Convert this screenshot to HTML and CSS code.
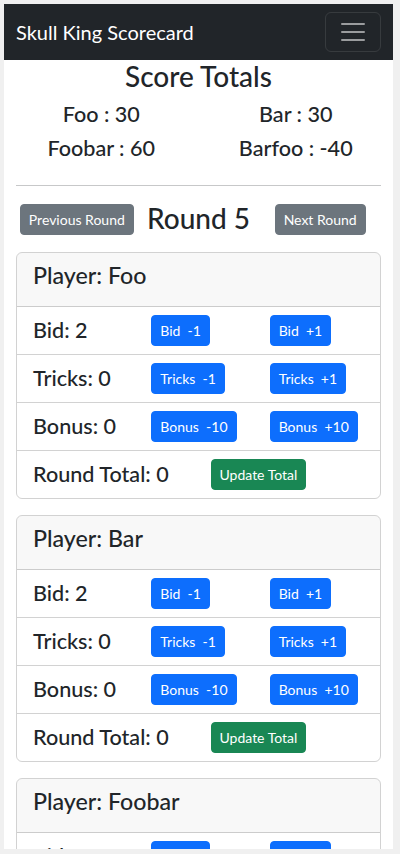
FILE: index.html
```html
<!DOCTYPE html>
<html lang="en">
<head>
<meta charset="utf-8">
<title>Skull King Scorecard</title>
<link rel="stylesheet" href="styles.css">
</head>
<body>
<div class="page">
  <nav class="navbar">
    <span class="brand">Skull King Scorecard</span>
    <button class="toggler" type="button" aria-label="Toggle navigation">
      <svg class="toggler-icon" viewBox="0 0 30 30" width="30" height="30"><path d="M4 7h22M4 15h22M4 23h22" stroke="rgba(255,255,255,0.55)" stroke-width="2" stroke-linecap="round" stroke-miterlimit="10" fill="none"/></svg>
    </button>
  </nav>

  <main class="container">
    <h1 class="title">Score Totals</h1>
    <div class="totals">
      <h4 class="total">Foo : 30</h4>
      <h4 class="total">Bar : 30</h4>
      <h4 class="total">Foobar : 60</h4>
      <h4 class="total">Barfoo : -40</h4>
    </div>
    <hr class="divider">

    <div class="round-nav">
      <button class="btn btn-sm btn-secondary" type="button">Previous Round</button>
      <h1 class="round-title">Round 5</h1>
      <button class="btn btn-sm btn-secondary" type="button">Next Round</button>
    </div>

    <section class="card">
      <div class="card-header"><h3 class="player">Player: Foo</h3></div>
      <div class="item three">
        <h4 class="label">Bid: 2</h4>
        <div class="cell"><button class="btn btn-sm btn-primary">Bid&nbsp; -1</button></div>
        <div class="cell"><button class="btn btn-sm btn-primary">Bid&nbsp; +1</button></div>
      </div>
      <div class="item three">
        <h4 class="label">Tricks: 0</h4>
        <div class="cell"><button class="btn btn-sm btn-primary">Tricks&nbsp; -1</button></div>
        <div class="cell"><button class="btn btn-sm btn-primary">Tricks&nbsp; +1</button></div>
      </div>
      <div class="item three">
        <h4 class="label">Bonus: 0</h4>
        <div class="cell"><button class="btn btn-sm btn-primary">Bonus&nbsp; -10</button></div>
        <div class="cell"><button class="btn btn-sm btn-primary">Bonus&nbsp; +10</button></div>
      </div>
      <div class="item two">
        <h4 class="label">Round Total: 0</h4>
        <div class="cell"><button class="btn btn-sm btn-success">Update Total</button></div>
      </div>
    </section>

    <section class="card">
      <div class="card-header"><h3 class="player">Player: Bar</h3></div>
      <div class="item three">
        <h4 class="label">Bid: 2</h4>
        <div class="cell"><button class="btn btn-sm btn-primary">Bid&nbsp; -1</button></div>
        <div class="cell"><button class="btn btn-sm btn-primary">Bid&nbsp; +1</button></div>
      </div>
      <div class="item three">
        <h4 class="label">Tricks: 0</h4>
        <div class="cell"><button class="btn btn-sm btn-primary">Tricks&nbsp; -1</button></div>
        <div class="cell"><button class="btn btn-sm btn-primary">Tricks&nbsp; +1</button></div>
      </div>
      <div class="item three">
        <h4 class="label">Bonus: 0</h4>
        <div class="cell"><button class="btn btn-sm btn-primary">Bonus&nbsp; -10</button></div>
        <div class="cell"><button class="btn btn-sm btn-primary">Bonus&nbsp; +10</button></div>
      </div>
      <div class="item two">
        <h4 class="label">Round Total: 0</h4>
        <div class="cell"><button class="btn btn-sm btn-success">Update Total</button></div>
      </div>
    </section>

    <section class="card">
      <div class="card-header"><h3 class="player">Player: Foobar</h3></div>
      <div class="item three">
        <h4 class="label">Bid: 2</h4>
        <div class="cell"><button class="btn btn-sm btn-primary">Bid&nbsp; -1</button></div>
        <div class="cell"><button class="btn btn-sm btn-primary">Bid&nbsp; +1</button></div>
      </div>
      <div class="item three">
        <h4 class="label">Tricks: 0</h4>
        <div class="cell"><button class="btn btn-sm btn-primary">Tricks&nbsp; -1</button></div>
        <div class="cell"><button class="btn btn-sm btn-primary">Tricks&nbsp; +1</button></div>
      </div>
    </section>
  </main>
</div>
</body>
</html>
```
FILE: styles.css
```css
* { box-sizing: border-box; }

html, body {
  margin: 0;
  padding: 0;
  background: #f0f0f0;
}

body {
  font-family: Lato, "Noto Sans", sans-serif;
  color: #212529;
  font-size: 16px;
  line-height: 1.5;
}

.page {
  margin: 4px 0 0 4px;
  width: 389px;
  height: 845px;
  overflow: hidden;
  background: #fff;
}

/* navbar */
.navbar {
  height: 56px;
  background: #212529;
  padding: 8px 12px;
  display: flex;
  align-items: center;
  justify-content: space-between;
}

.brand {
  color: #fff;
  font-size: 20px;
  line-height: 30px;
  padding: 5px 0;
}

.toggler {
  width: 56px;
  height: 40px;
  padding: 4px 12px;
  background: transparent;
  border: 1px solid rgba(255, 255, 255, 0.1);
  border-radius: 6px;
  display: flex;
  align-items: center;
  justify-content: center;
}

.toggler-icon { display: block; }

/* content */
.container { padding: 0 12px; }

.title {
  margin: 0 0 8px;
  font-size: 28px;
  font-weight: 500;
  line-height: 1.2;
  text-align: center;
}

.totals {
  display: grid;
  grid-template-columns: 1fr 1fr;
  margin: 0 -12px;
}

.total {
  margin: 0 0 8px;
  padding: 0 12px;
  font-size: 21.6px;
  font-weight: 500;
  line-height: 1.2;
  text-align: center;
}

.divider {
  margin: 16px 0;
  border: 0;
  border-top: 1px solid rgba(33, 37, 41, 0.25);
}

.round-nav {
  display: grid;
  grid-template-columns: 1fr 1fr 1fr;
  align-items: center;
  justify-items: center;
  margin-bottom: 16px;
}

.round-title {
  margin: 0;
  font-size: 28px;
  font-weight: 500;
  line-height: 1.2;
  white-space: nowrap;
}

/* buttons */
.btn {
  font-family: inherit;
  display: inline-block;
  border: 1px solid transparent;
  color: #fff;
  cursor: pointer;
  white-space: nowrap;
}

.btn-sm {
  padding: 4px 8px;
  font-size: 14px;
  line-height: 1.5;
  border-radius: 4px;
}

.btn-secondary { background: #6c757d; border-color: #6c757d; }
.btn-primary { background: #0d6efd; border-color: #0d6efd; }
.btn-success { background: #198754; border-color: #198754; }

/* cards */
.card {
  border: 1px solid rgba(0, 0, 0, 0.175);
  border-radius: 6px;
  margin-bottom: 16px;
  overflow: hidden;
}

.card-header {
  background: rgba(33, 37, 41, 0.03);
  padding: 8px 16px;
  border-bottom: 1px solid rgba(0, 0, 0, 0.175);
}

.player {
  margin: 0 0 8px;
  font-size: 23.2px;
  font-weight: 500;
  line-height: 29px;
}

.item {
  border-top: 1px solid rgba(0, 0, 0, 0.175);
}

.card-header + .item { border-top: 0; }

.item .label,
.item .cell { padding: 0 12px; }

.three, .two {
  display: grid;
  align-items: center;
}

.three { grid-template-columns: 1fr 1fr 1fr; }
.two { grid-template-columns: 1fr 1fr; }

.item.three, .item.two {
  padding: 8px 4px;
}

.label {
  margin: 0;
  font-size: 21.6px;
  font-weight: 500;
  line-height: 1.2;
  white-space: nowrap;
}
```
